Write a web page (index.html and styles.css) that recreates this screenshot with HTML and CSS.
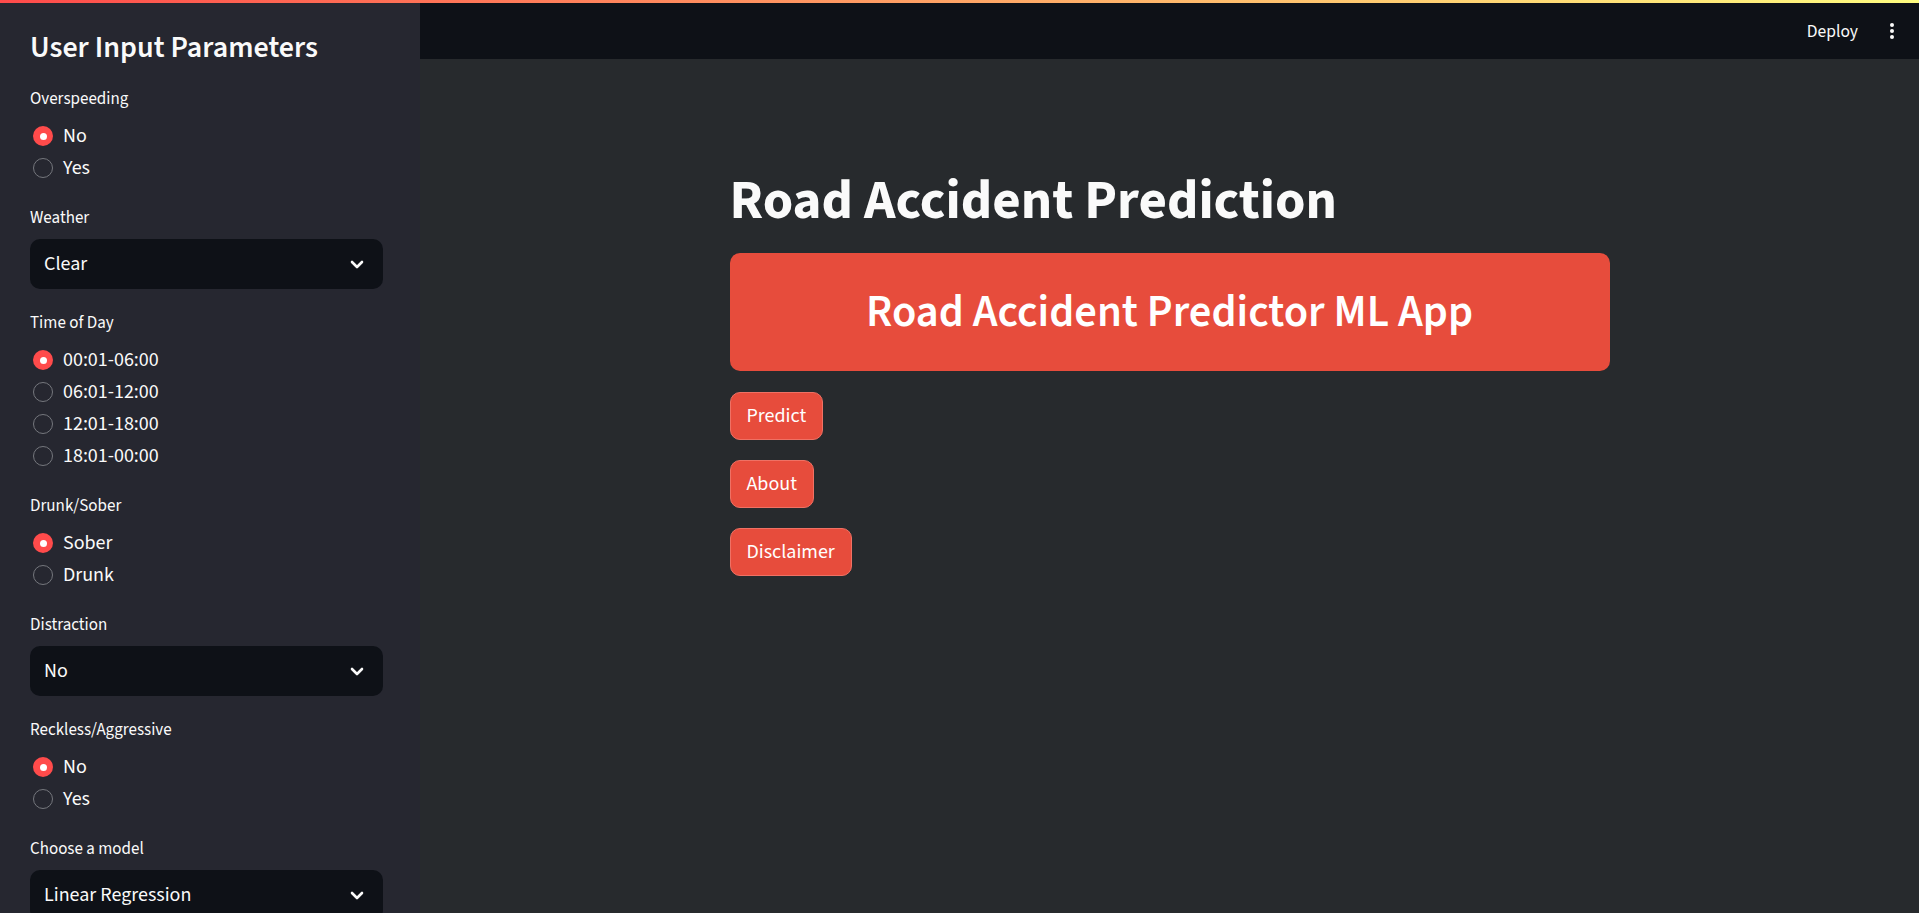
FILE: index.html
```html
<!DOCTYPE html>
<html lang="en">
<head>
<meta charset="utf-8">
<title>Road Accident Prediction</title>
<link rel="stylesheet" href="styles.css">
</head>
<body>
<div class="deco"></div>
<div class="app">
  <aside class="sidebar">
    <h2 class="side-title">User Input Parameters</h2>
    <div class="widgets">
      <div class="widget">
        <div class="label">Overspeeding</div>
        <div class="radios">
          <div class="opt"><span class="dot on"></span>No</div>
          <div class="opt"><span class="dot"></span>Yes</div>
        </div>
      </div>
      <div class="widget">
        <div class="label">Weather</div>
        <div class="select"><span>Clear</span><svg class="chev" viewBox="0 0 14 9" width="14" height="9"><path d="M2 2l5 5 5-5" fill="none" stroke="#fafafa" stroke-width="2.6" stroke-linecap="round" stroke-linejoin="round"/></svg></div>
      </div>
      <div class="widget">
        <div class="label">Time of Day</div>
        <div class="radios">
          <div class="opt"><span class="dot on"></span>00:01-06:00</div>
          <div class="opt"><span class="dot"></span>06:01-12:00</div>
          <div class="opt"><span class="dot"></span>12:01-18:00</div>
          <div class="opt"><span class="dot"></span>18:01-00:00</div>
        </div>
      </div>
      <div class="widget">
        <div class="label">Drunk/Sober</div>
        <div class="radios">
          <div class="opt"><span class="dot on"></span>Sober</div>
          <div class="opt"><span class="dot"></span>Drunk</div>
        </div>
      </div>
      <div class="widget">
        <div class="label">Distraction</div>
        <div class="select"><span>No</span><svg class="chev" viewBox="0 0 14 9" width="14" height="9"><path d="M2 2l5 5 5-5" fill="none" stroke="#fafafa" stroke-width="2.6" stroke-linecap="round" stroke-linejoin="round"/></svg></div>
      </div>
      <div class="widget">
        <div class="label">Reckless/Aggressive</div>
        <div class="radios">
          <div class="opt"><span class="dot on"></span>No</div>
          <div class="opt"><span class="dot"></span>Yes</div>
        </div>
      </div>
      <div class="widget">
        <div class="label">Choose a model</div>
        <div class="select"><span>Linear Regression</span><svg class="chev" viewBox="0 0 14 9" width="14" height="9"><path d="M2 2l5 5 5-5" fill="none" stroke="#fafafa" stroke-width="2.6" stroke-linecap="round" stroke-linejoin="round"/></svg></div>
      </div>
    </div>
  </aside>
  <div class="main">
    <header class="topbar">
      <span class="deploy">Deploy</span>
      <span class="menu"><i></i><i></i><i></i></span>
    </header>
    <section class="content">
      <h1 class="title">Road Accident Prediction</h1>
      <div class="banner"><h2>Road Accident Predictor ML App</h2></div>
      <div class="buttons">
        <button class="btn">Predict</button>
        <button class="btn">About</button>
        <button class="btn">Disclaimer</button>
      </div>
    </section>
  </div>
</div>
</body>
</html>
```
FILE: styles.css
```css
* { box-sizing: border-box; }
html, body { margin: 0; padding: 0; }
body {
  width: 1919px;
  height: 913px;
  overflow: hidden;
  background: #272a2d;
  color: #fafafa;
  font-family: "Source Sans Pro", "Source Sans 3", Lato, "Noto Sans", sans-serif;
}
.deco {
  height: 3px;
  background: linear-gradient(90deg, #ff4b4b 0%, #fffd80 100%);
}
.app {
  display: flex;
  height: 910px;
}
.sidebar {
  width: 420px;
  flex: none;
  background: #262730;
  padding: 0 37px 0 30px;
  overflow: hidden;
}
.side-title {
  margin: 0;
  padding-top: 27px;
  font-size: 30px;
  line-height: 36px;
  font-weight: 600;
}
.widgets {
  display: flex;
  flex-direction: column;
  gap: 22px;
  margin-top: 21px;
}
.label {
  font-size: 17px;
  line-height: 25px;
  height: 25px;
  margin-bottom: 8px;
  color: #fafafa;
}
.radios { display: flex; flex-direction: column; }
.opt {
  height: 32px;
  display: flex;
  align-items: center;
  font-size: 20px;
  color: #fafafa;
}
.dot {
  width: 20px;
  height: 20px;
  border-radius: 50%;
  border: 1.5px solid #75777d;
  margin: 0 10px 0 3px;
  flex: none;
  position: relative;
}
.dot.on {
  border: none;
  background: #ff4b4b;
}
.dot.on::after {
  content: "";
  position: absolute;
  left: 6.5px;
  top: 6.5px;
  width: 7px;
  height: 7px;
  border-radius: 50%;
  background: #fff;
}
.select {
  height: 50px;
  background: #0e1117;
  border-radius: 10px;
  display: flex;
  align-items: center;
  justify-content: space-between;
  padding: 0 19px 0 14px;
  font-size: 20px;
}
.chev { display: block; }
.main {
  flex: 1;
  display: flex;
  flex-direction: column;
  min-width: 0;
}
.topbar {
  height: 56px;
  background: #0e1117;
  display: flex;
  align-items: center;
  justify-content: flex-end;
  padding-right: 25px;
}
.deploy {
  font-size: 17.5px;
  margin-right: 32px;
}
.menu {
  display: flex;
  flex-direction: column;
  gap: 2px;
  align-items: center;
}
.menu i {
  width: 4px;
  height: 4px;
  border-radius: 50%;
  background: #fafafa;
  display: block;
}
.content {
  width: 880px;
  margin: 0 auto;
  padding-top: 109px;
}
.title {
  margin: 0;
  font-size: 55px;
  line-height: 66px;
  font-weight: 700;
}
.banner {
  margin-top: 19px;
  height: 118px;
  background: #e74c3c;
  border-radius: 10px;
  display: flex;
  align-items: center;
  justify-content: center;
}
.banner h2 {
  margin: 0;
  font-size: 44.5px;
  font-weight: 600;
  color: #ffffff;
}
.buttons {
  margin-top: 21px;
  display: flex;
  flex-direction: column;
  align-items: flex-start;
  gap: 20px;
}
.btn {
  height: 48px;
  padding: 0 16px;
  background: #e74c3c;
  border: 1px solid #ef7164;
  border-radius: 10px;
  color: #ffffff;
  font-family: inherit;
  font-size: 20px;
}
```
